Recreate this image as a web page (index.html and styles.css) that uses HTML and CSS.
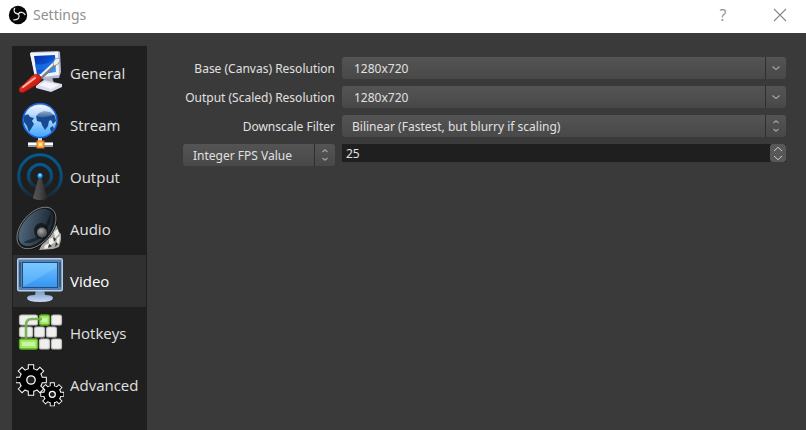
FILE: index.html
```html
<!DOCTYPE html>
<html lang="en">
<head>
<meta charset="utf-8">
<meta name="viewport" content="width=device-width, initial-scale=1">
<title>Settings</title>
<link rel="stylesheet" href="styles.css">
</head>
<body>
<header class="titlebar">
  <svg class="app-logo" viewBox="0 0 20 20" aria-hidden="true">
    <circle cx="10" cy="10" r="9.2" fill="#080808"/>
    <g fill="none" stroke="#e8e8e8" stroke-width="1.3" stroke-linecap="round">
      <path d="M6.6 3.4C5 6.4 6.6 8.6 10.4 9"/>
      <path d="M10.4 9C11.6 6.6 15.4 6.6 17 9.6"/>
      <path d="M10.4 9C12.4 12 10.4 15.2 5.8 14.8"/>
    </g>
  </svg>
  <h1 class="title">Settings</h1>
  <button class="window-button" type="button" aria-label="Help">?</button>
  <button class="window-button" type="button" aria-label="Close">
    <svg class="close-icon" viewBox="0 0 14 14" aria-hidden="true"><path d="M1 1L13 13M13 1L1 13" fill="none" stroke="#888" stroke-width="1.1"/></svg>
  </button>
</header>
<main class="window">
  <nav class="sidebar">
    <button class="tab" type="button">
      <svg class="icon" viewBox="0 0 48 48" aria-hidden="true">
        <defs>
          <linearGradient id="screen" x1="0" y1="0" x2="1" y2="1"><stop offset="0" stop-color="#0432a8"/><stop offset=".5" stop-color="#0a4fd0"/><stop offset="1" stop-color="#4bb2ff"/></linearGradient>
          <linearGradient id="handle" x1="0" y1="0" x2="1" y2="1"><stop offset="0" stop-color="#ff8c78"/><stop offset=".5" stop-color="#dc2416"/><stop offset="1" stop-color="#8a0c08"/></linearGradient>
        </defs>
        <path d="M27 29l9-1 2 6-9 2z" fill="#aab0c4"/>
        <path d="M20 36l8-5 18 4v3l-11 5-15-4z" fill="#d8dcec"/>
        <path d="M23 36l6-3 14 3-8 4z" fill="#f6f7fc"/>
        <path d="M14 5l1-2 27-1 2 1 1 20-2 6-23 1z" fill="#b4bbd0"/>
        <path d="M14 4l28-1 1 23-24 3z" fill="#f2f4fb"/>
        <path d="M18 7l21-1 1 17-19 3z" fill="url(#screen)"/>
        <path d="M19 15q11 2 20-5v6q-8 5-19 5z" fill="#1d76e5" opacity=".7"/>
        <path d="M23 30L39 15" stroke="#777f8a" stroke-width="4"/>
        <path d="M22 29L38 14" stroke="#f2f4f6" stroke-width="2"/>
        <path d="M37 14l2-4 4-1 1 2-2 4-4 2z" fill="#edf1f5" stroke="#7b8590" stroke-width=".7"/>
        <path d="M3 41q0-3 4-5l9-9q4-3 7-1 4 3 1 7-2 3-7 5l-7 4q-6 4-7-1z" fill="url(#handle)" stroke="#8b120c" stroke-width=".7"/>
        <path d="M7 38l12-9" stroke="#ffb7a9" stroke-width="2" stroke-linecap="round"/>
      </svg>
      <span>General</span>
    </button>
    <button class="tab" type="button">
      <svg class="icon" viewBox="0 0 48 48" aria-hidden="true">
        <defs>
          <linearGradient id="globe" x1="0" y1="0" x2="0" y2="1"><stop offset="0" stop-color="#88b8f4"/><stop offset=".5" stop-color="#a5d2ff"/><stop offset="1" stop-color="#3aa3ff"/></linearGradient>
          <linearGradient id="shine" x1="0" y1="0" x2="0" y2="1"><stop offset="0" stop-color="#fff" stop-opacity=".9"/><stop offset="1" stop-color="#fff" stop-opacity=".15"/></linearGradient>
        </defs>
        <path d="M24 36v6" stroke="#d7d9df" stroke-width="4"/>
        <rect x="12" y="41" width="25" height="5" fill="#9b9ea6"/>
        <rect x="12" y="42" width="25" height="2" fill="#fff"/>
        <rect x="21" y="40" width="7" height="7" fill="#ffb647" stroke="#e86716"/>
        <rect x="23" y="42" width="3" height="3" fill="#fff08a"/>
        <circle cx="24" cy="19.5" r="17" fill="url(#globe)" stroke="#1761d4" stroke-width="1.6"/>
        <path d="M8 15l4-2 2 3 4 1-2 3 2 3-3 5-2 3-2-6-3-4zM20 15l3-3 5-2 6 1 5 4 1 5-3 3-2-4-2 1-1 5-3 4-3-5-1-3-4-1zM34 27l3-2 1 3-3 3z" fill="#174b91"/>
        <path d="M9 13Q13 4 24 4t15 9q-7 4-15 3T9 13z" fill="url(#shine)"/>
      </svg>
      <span>Stream</span>
    </button>
    <button class="tab" type="button">
      <svg class="icon" viewBox="0 0 48 48" aria-hidden="true">
        <defs>
          <linearGradient id="wave" x1="0" y1="0" x2="0" y2="1"><stop offset="0" stop-color="#045a93"/><stop offset=".6" stop-color="#0a4a75"/><stop offset="1" stop-color="#1c2730"/></linearGradient>
          <linearGradient id="mast" x1="0" y1="0" x2="1" y2="0"><stop offset="0" stop-color="#555"/><stop offset=".45" stop-color="#484848"/><stop offset="1" stop-color="#292929"/></linearGradient>
        </defs>
        <circle cx="24" cy="23" r="21.3" fill="none" stroke="url(#wave)" stroke-width="3"/>
        <circle cx="24" cy="23" r="11.5" fill="none" stroke="url(#wave)" stroke-width="3.2"/>
        <path d="M23 23h2l6 22q-2 2-7 2t-7-2z" fill="url(#mast)"/>
        <circle cx="24" cy="22.5" r="2.6" fill="#1698f5"/><circle cx="24" cy="22" r="1.2" fill="#8bd2ff"/>
      </svg>
      <span>Output</span>
    </button>
    <button class="tab" type="button">
      <svg class="icon" viewBox="0 0 48 48" aria-hidden="true">
        <defs>
          <linearGradient id="cone" x1="0" y1="0" x2="1" y2="1"><stop offset=".1" stop-color="#536b80"/><stop offset=".6" stop-color="#2e3d4b"/><stop offset="1" stop-color="#14191e"/></linearGradient>
          <radialGradient id="cap" cx=".4" cy=".35"><stop offset="0" stop-color="#aaa"/><stop offset="1" stop-color="#5c5c5c"/></radialGradient>
        </defs>
        <path d="M37 20l4 1 1 5 3 3v6l-2 7-6 2-14 1z" fill="#a9aaa6"/>
        <path d="M38 27l4-3 1 5-4 4zM33 34l5-2 1 5-6 4zM41 33l3-2-1 7-3 2zM29 40l5-2-1 5-5 1z" fill="#f0f0ea"/>
        <path d="M37 32l3 2-2 3zM40 37l2 2-3 3zM33 39l3 2-4 2z" fill="#2c2d2c"/>
        <ellipse cx="21.5" cy="24" rx="25" ry="14.5" transform="rotate(-49 21.5 24)" fill="#090a0b"/>
        <ellipse cx="20.5" cy="23" rx="24.4" ry="14.8" transform="rotate(-49 20.5 23)" fill="#161819" stroke="#8f9395" stroke-width=".8"/>
        <ellipse cx="20" cy="22.5" rx="22" ry="13" transform="rotate(-49 20 22.5)" fill="url(#cone)"/>
        <path d="M27 26L35 8q1 8-6 19zM21 32L7 37q6 4 17-4z" fill="#060b10" opacity=".5"/>
        <ellipse cx="25" cy="26" rx="7" ry="8" fill="#0e1419" opacity=".8"/>
        <circle cx="26" cy="27.5" r="5" fill="url(#cap)"/>
      </svg>
      <span>Audio</span>
    </button>
    <button class="tab tab-current" type="button" aria-current="page">
      <svg class="icon" viewBox="0 0 48 48" aria-hidden="true">
        <defs>
          <linearGradient id="panel" x1="0" y1="0" x2="0" y2="1"><stop offset="0" stop-color="#71c4ff"/><stop offset="1" stop-color="#3394f4"/></linearGradient>
          <linearGradient id="stand" x1="0" y1="0" x2="0" y2="1"><stop offset="0" stop-color="#7193ba"/><stop offset="1" stop-color="#c5dcf6"/></linearGradient>
        </defs>
        <path d="M20 33h8l1 5q8 0 8 3 0 4-13 4t-13-4q0-3 8-3z" fill="url(#stand)"/>
        <rect x="1.7" y="1.7" width="44.6" height="32" rx="1.5" fill="#5b82ac" stroke="#b0cff0" stroke-width="1.4"/>
        <path d="M4 5v25M44 5v25" stroke="#2c4d70" stroke-width="1.5"/>
        <rect x="6.5" y="5.5" width="35" height="25" fill="url(#panel)" stroke="#234d78"/>
        <path d="M7 30L41 10V6H7z" fill="#8bd1ff" opacity=".35"/>
      </svg>
      <span>Video</span>
    </button>
    <button class="tab" type="button">
      <svg class="icon" viewBox="0 0 48 48" aria-hidden="true">
        <g fill="#efefec" stroke="#bcbcb9" stroke-width="1.2">
          <rect x="3.5" y="6" width="18" height="10" rx="2"/><rect x="35.5" y="6" width="10" height="10" rx="2"/>
          <rect x="3.5" y="18" width="13" height="10" rx="2"/><rect x="18.5" y="18" width="10" height="10" rx="2"/><rect x="30.5" y="18" width="10" height="10" rx="2"/>
          <rect x="23.5" y="30" width="10" height="10" rx="2"/><rect x="35.5" y="30" width="10" height="10" rx="2"/>
        </g>
        <g fill="#a5e768" stroke="#5cae20" stroke-width="1.3">
          <rect x="23.5" y="6" width="10" height="10" rx="2"/><rect x="3.5" y="30" width="18" height="10" rx="2"/>
        </g>
        <path d="M25.5 9h6v4h-6zM6 33h13v4H6z" fill="#c9f5a0"/>
        <path d="M10 31V16q0-6 6-6h10" fill="none" stroke="#71ad4e" stroke-width="2.6" opacity=".9"/>
      </svg>
      <span>Hotkeys</span>
    </button>
    <button class="tab" type="button">
      <svg class="icon" viewBox="0 0 48 48" aria-hidden="true">
        <defs>
          <g id="gear">
            <circle r="11"/>
            <path id="teeth" d="M-2.2-14.8H2.2V-9H-2.2zM-2.2 14.8H2.2V9H-2.2zM-14.8-2.2V2.2H-9V-2.2zM14.8-2.2V2.2H9V-2.2z"/>
            <use href="#teeth" transform="rotate(45)"/>
          </g>
        </defs>
        <g transform="translate(15 19)">
          <use href="#gear" fill="#fff" stroke="#fff" stroke-width="2"/><use href="#gear" fill="#000"/>
          <circle r="4.2" fill="#1f1f1f" stroke="#fff" stroke-width="1.3"/>
        </g>
        <g transform="translate(36.3 33.3) scale(.75)">
          <use href="#gear" fill="#fff" stroke="#fff" stroke-width="2.4"/><use href="#gear" fill="#000"/>
          <circle r="4" fill="#1f1f1f" stroke="#fff" stroke-width="1.7"/>
        </g>
      </svg>
      <span>Advanced</span>
    </button>
  </nav>
  <form class="form">
    <label class="label" for="base">Base (Canvas) Resolution</label>
    <div class="control">
      <input class="field field-editable" id="base" type="text" value="1280x720">
      <button class="drop" type="button" aria-label="Show base resolutions"><svg class="chevron" viewBox="0 0 10 12" aria-hidden="true"><path d="M1.5 4.5L5 7.5L8.5 4.5"/></svg></button>
    </div>
    <label class="label" for="output">Output (Scaled) Resolution</label>
    <div class="control">
      <input class="field field-editable" id="output" type="text" value="1280x720">
      <button class="drop" type="button" aria-label="Show output resolutions"><svg class="chevron" viewBox="0 0 10 12" aria-hidden="true"><path d="M1.5 4.5L5 7.5L8.5 4.5"/></svg></button>
    </div>
    <label class="label" for="filter">Downscale Filter</label>
    <div class="control">
      <select class="field" id="filter"><option>Bilinear (Fastest, but blurry if scaling)</option></select>
      <span class="drop drop-overlay"><svg class="chevron" viewBox="0 0 10 12" aria-hidden="true"><path d="M2.5 3L5 .8L7.5 3M2.5 9L5 11.2L7.5 9"/></svg></span>
    </div>
    <div class="control">
      <select class="field" id="fps-type" aria-label="FPS type"><option>Integer FPS Value</option></select>
      <span class="drop drop-overlay"><svg class="chevron" viewBox="0 0 10 12" aria-hidden="true"><path d="M2.5 3L5 .8L7.5 3M2.5 9L5 11.2L7.5 9"/></svg></span>
    </div>
    <div class="spin">
      <input class="spin-input" type="text" inputmode="numeric" value="25" aria-label="FPS value">
      <div class="spin-buttons">
        <button class="step" type="button" aria-label="Increase"><svg class="step-icon" viewBox="0 0 10 6" aria-hidden="true"><path d="M1 5L5 1.3L9 5"/></svg></button>
        <button class="step" type="button" aria-label="Decrease"><svg class="step-icon" viewBox="0 0 10 6" aria-hidden="true"><path d="M1 1L5 4.7L9 1"/></svg></button>
      </div>
    </div>
  </form>
</main>
</body>
</html>
```
FILE: styles.css
```css
* { box-sizing: border-box; }

body {
  margin: 0;
  min-height: 100vh;
  display: flex;
  flex-direction: column;
  background: #3a3a3a;
  color: #e1e0e1;
  font: 12px/16px "Noto Sans", sans-serif;
}

button, input, select {
  margin: 0;
  padding: 0;
  border: 0;
  border-radius: 0;
  background: none;
  color: inherit;
  font: inherit;
}

.titlebar {
  display: flex;
  align-items: center;
  height: 33px;
  padding: 0 12px 4px 8px;
  background: #fff;
  color: #909090;
}

.app-logo { width: 20px; height: 20px; margin-right: 5px; }

.title {
  flex: 1;
  margin: 0;
  font: 14px/20px "Noto Sans", sans-serif;
}

.window-button {
  display: grid;
  place-items: center;
  width: 28px;
  height: 28px;
  margin-left: 29px;
  font: 16px/20px "Open Sans", sans-serif;
}

.close-icon { width: 14px; height: 14px; }

.window {
  flex: 1;
  display: flex;
  gap: 35px;
  padding: 13px 20px 0 12px;
}

.sidebar {
  flex: none;
  width: 135px;
  padding: 1px;
  background: #1f1f1f;
}

.tab {
  display: flex;
  align-items: center;
  gap: 6px;
  width: 100%;
  height: 52px;
  padding: 0 3px;
  font: 15px/20px "Open Sans", sans-serif;
  text-align: left;
}

.tab-current { background: #303030; color: #fff; }

.icon { flex: none; width: 48px; height: 48px; }

.form {
  flex: 1;
  display: grid;
  grid-template-columns: 153px 1fr;
  align-content: start;
  gap: 7px;
  padding-top: 11px;
}

.label {
  height: 22px;
  line-height: 24px;
  text-align: right;
  white-space: nowrap;
}

.control {
  position: relative;
  display: flex;
  height: 22px;
  border-radius: 3px;
  overflow: hidden;
  background: linear-gradient(#545454, #484848);
}

.control:has(#fps-type) { margin-left: 1px; }

.field {
  flex: 1;
  min-width: 0;
  padding: 2px 10px 0;
  appearance: none;
}

.field-editable { padding-left: 12px; }

.drop {
  display: grid;
  place-items: center;
  width: 21px;
  height: 22px;
  border-left: 1px solid #2e2e2e;
}

.drop-overlay {
  position: absolute;
  top: 0;
  right: 0;
  pointer-events: none;
}

.chevron { width: 10px; height: 12px; }

.chevron path { fill: none; stroke: #a2a2a2; stroke-width: 1.2; }

.spin {
  display: flex;
  height: 18px;
  background: #1f1f1f;
}

.spin-input { flex: 1; min-width: 0; padding: 2px 4px 0; }

.spin-buttons {
  display: flex;
  flex-direction: column;
  width: 16px;
  border-radius: 3px;
  background: #585858;
}

.step { flex: 1; display: grid; place-items: center; }

.step-icon { width: 10px; height: 6px; }

.step-icon path { fill: none; stroke: #c8c8c8; stroke-width: 1; }
```
